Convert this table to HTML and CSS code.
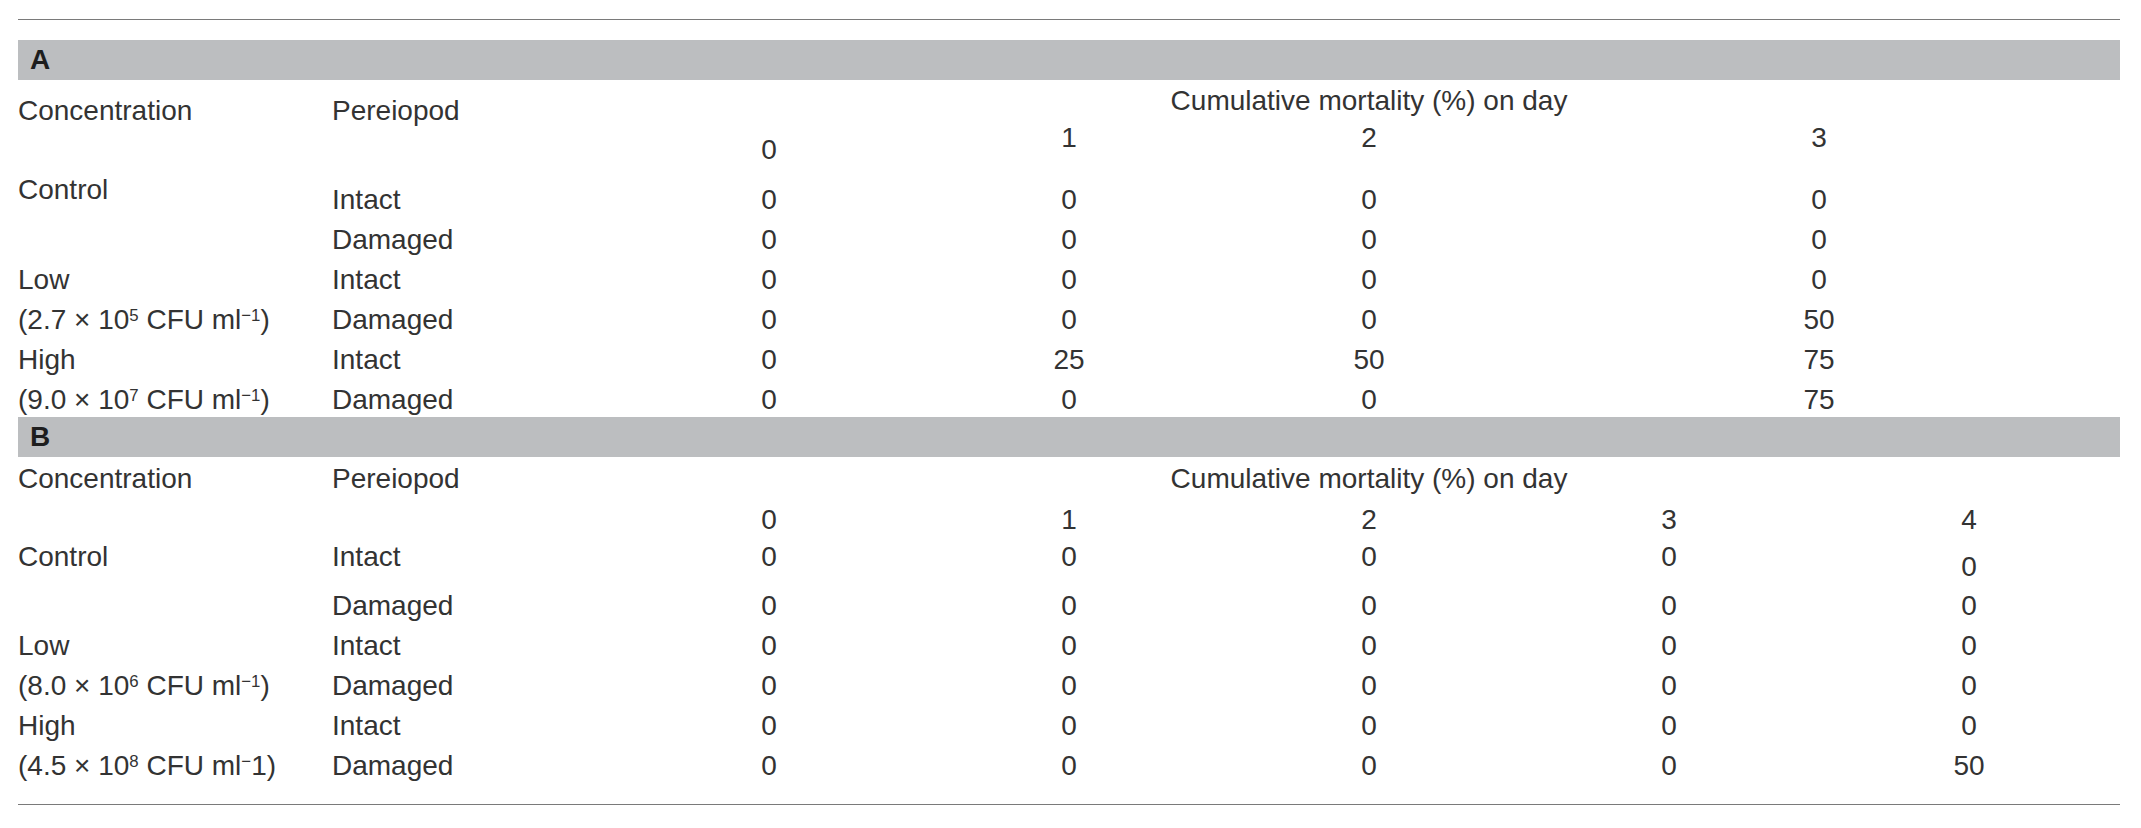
FILE: index.html
```html
<!DOCTYPE html>
<html lang="en">
<head>
<meta charset="utf-8">
<title>Cumulative mortality table</title>
<link rel="stylesheet" href="styles.css">
</head>
<body>
<div class="page">
  <div class="rule rule-top"></div>

  <section class="panel">
    <div class="band">A</div>
    <div class="grid grid-a">
      <div class="c h-conc">Concentration</div>
      <div class="c h-per">Pereiopod</div>
      <div class="c num h-cum">Cumulative mortality (%) on day</div>
      <div class="c num day day-zero">0</div>
      <div class="c num day">1</div>
      <div class="c num day">2</div>
      <div class="c num day wide">3</div>

      <div class="c lbl lbl-high">Control</div>
      <div class="c">Intact</div>
      <div class="c num">0</div><div class="c num">0</div><div class="c num">0</div><div class="c num wide">0</div>

      <div class="c"></div>
      <div class="c">Damaged</div>
      <div class="c num">0</div><div class="c num">0</div><div class="c num">0</div><div class="c num wide">0</div>

      <div class="c">Low</div>
      <div class="c">Intact</div>
      <div class="c num">0</div><div class="c num">0</div><div class="c num">0</div><div class="c num wide">0</div>

      <div class="c">(2.7 × 10<sup>5</sup> CFU ml<sup>−1</sup>)</div>
      <div class="c">Damaged</div>
      <div class="c num">0</div><div class="c num">0</div><div class="c num">0</div><div class="c num wide">50</div>

      <div class="c">High</div>
      <div class="c">Intact</div>
      <div class="c num">0</div><div class="c num">25</div><div class="c num">50</div><div class="c num wide">75</div>

      <div class="c">(9.0 × 10<sup>7</sup> CFU ml<sup>−1</sup>)</div>
      <div class="c">Damaged</div>
      <div class="c num">0</div><div class="c num">0</div><div class="c num">0</div><div class="c num wide">75</div>
    </div>
  </section>

  <section class="panel panel-b">
    <div class="band">B</div>
    <div class="grid grid-b">
      <div class="c h-conc">Concentration</div>
      <div class="c h-per">Pereiopod</div>
      <div class="c num h-cum">Cumulative mortality (%) on day</div>
      <div class="c num day">0</div>
      <div class="c num day">1</div>
      <div class="c num day">2</div>
      <div class="c num day">3</div>
      <div class="c num day">4</div>

      <div class="c">Control</div>
      <div class="c">Intact</div>
      <div class="c num">0</div><div class="c num">0</div><div class="c num">0</div><div class="c num">0</div><div class="c num low">0</div>

      <div class="c"></div>
      <div class="c">Damaged</div>
      <div class="c num">0</div><div class="c num">0</div><div class="c num">0</div><div class="c num">0</div><div class="c num">0</div>

      <div class="c">Low</div>
      <div class="c">Intact</div>
      <div class="c num">0</div><div class="c num">0</div><div class="c num">0</div><div class="c num">0</div><div class="c num">0</div>

      <div class="c">(8.0 × 10<sup>6</sup> CFU ml<sup>−1</sup>)</div>
      <div class="c">Damaged</div>
      <div class="c num">0</div><div class="c num">0</div><div class="c num">0</div><div class="c num">0</div><div class="c num">0</div>

      <div class="c">High</div>
      <div class="c">Intact</div>
      <div class="c num">0</div><div class="c num">0</div><div class="c num">0</div><div class="c num">0</div><div class="c num">0</div>

      <div class="c">(4.5 × 10<sup>8</sup> CFU ml<sup>−</sup>1)</div>
      <div class="c">Damaged</div>
      <div class="c num">0</div><div class="c num">0</div><div class="c num">0</div><div class="c num">0</div><div class="c num">50</div>
    </div>
  </section>

  <div class="rule rule-bottom"></div>
</div>
</body>
</html>
```

FILE: styles.css
```css
html, body {
  margin: 0;
  padding: 0;
  background: #ffffff;
}

body {
  font-family: "Liberation Sans", Arial, sans-serif;
  font-size: 28px;
  line-height: 28px;
  color: #333333;
}

.page {
  width: 2102px;
  padding: 19px 0 0 18px;
}

.rule {
  height: 1px;
  background: #7a7a7a;
}

.rule-bottom {
  margin-top: 22px;
}

.panel {
  margin-top: 20px;
}

.panel-b {
  margin-top: 3px;
}

.band {
  height: 40px;
  box-sizing: border-box;
  padding: 6px 0 0 12px;
  background: #bcbec0;
  font-weight: bold;
  color: #1e1e1e;
}

.grid {
  display: grid;
  grid-template-columns: 314px 287px repeat(5, 300px);
}

.grid-a {
  grid-template-rows: 40px 54px repeat(6, 40px);
}

.grid-b {
  grid-template-rows: 40px 36px 49px repeat(5, 40px);
}

.c {
  white-space: nowrap;
  padding-top: 12px;
}

.grid-b .c {
  padding-top: 10px;
}

.num {
  text-align: center;
}

.h-conc,
.h-per {
  grid-row: span 2;
}

.h-cum {
  grid-column: span 5;
}

.wide {
  grid-column: span 2;
}

/* header cells, panel A */
.grid-a .h-conc,
.grid-a .h-per {
  padding-top: 17px;
}

.grid-a .h-cum {
  padding-top: 7px;
}

.grid-a .day {
  padding-top: 4px;
}

.grid-a .day-zero {
  padding-top: 16px;
}

.grid-a .lbl-high {
  padding-top: 2px;
}

/* header cells, panel B */
.grid-b .h-conc,
.grid-b .h-per,
.grid-b .h-cum {
  padding-top: 8px;
}

.grid-b .day {
  padding-top: 9px;
}

.grid-b .low {
  padding-top: 20px;
}

sup {
  font-size: 0.6em;
  line-height: 0;
  vertical-align: 0.5em;
}
```
